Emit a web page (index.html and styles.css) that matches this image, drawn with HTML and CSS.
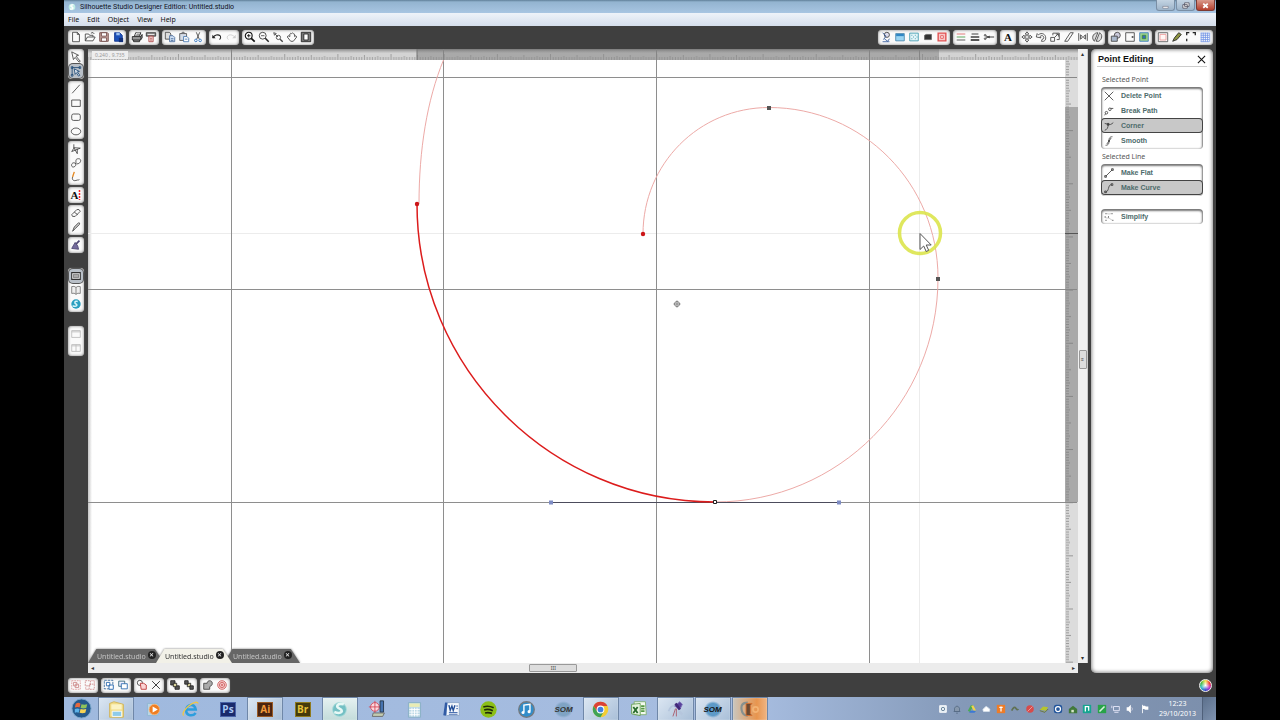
FILE: index.html
```html
<!DOCTYPE html>
<html lang="en">
<head>
<meta charset="utf-8">
<title>Silhouette Studio Designer Edition: Untitled.studio</title>
<link rel="stylesheet" href="styles.css">
</head>
<body>
<div class="desktop">
  <header class="titlebar">
    <svg class="app-logo" viewBox="0 0 12 12"><circle cx="6" cy="6" r="5" fill="#bfeee6" stroke="none"/><path d="M8 3C4 2 3 5 6 6s1 4-3 3" stroke="#fff" stroke-width="2"/></svg>
    <h1 class="title">Silhouette Studio Designer Edition: Untitled.studio</h1>
    <div class="window-buttons">
      <button class="win" aria-label="Minimize"><svg viewBox="0 0 18 10"><path d="M6 6h6v2H6z" fill="#fff" stroke="#667" stroke-width=".6"/></svg></button>
      <button class="win" aria-label="Restore"><svg viewBox="0 0 18 10"><path d="M8 2h5v4H8zM6 4h5v4H6z" fill="#eee" stroke="#556" stroke-width=".9"/></svg></button>
      <button class="win win-close" aria-label="Close window"><svg viewBox="0 0 18 10"><path d="M6.500 3l5 4.500M11.500 3l-5 4.500" stroke="#fff" stroke-width="2"/></svg></button>
    </div>
  </header>
  <nav class="menubar">
    <button>File</button><button>Edit</button><button>Object</button><button>View</button><button>Help</button>
  </nav>

  <div class="toolbar">
    <div class="group">
      <button aria-label="New"><svg viewBox="0 0 14 14"><path d="M3 1.500h5.500L11 4v8.500H3zM8.500 1.500V4H11"/></svg></button>
      <button aria-label="Open"><svg viewBox="0 0 14 14"><path d="M1.500 11.500V3.500h4l1 1.500h4v2M1.500 11.500L4 7h9l-2.500 4.500zM8 2.500q3-2 4 1"/></svg></button>
      <button aria-label="Save"><svg viewBox="0 0 14 14"><path d="M2 2h9l1 1v9H2z" fill="#c9a7a0" stroke="#704a48"/><path d="M4 2h6v4H4zM4 8h6v4H4z" fill="#fff" stroke="#704a48"/></svg></button>
      <button aria-label="Save to SD card"><svg viewBox="0 0 14 14"><path d="M3 2h6l3 3v7H3z" fill="#1c50b8" stroke="#173a90"/><path d="M5 2h4v3H5z" fill="#9cc0f0" stroke="none"/><path d="M8 8h5v5H8z" fill="#123078" stroke="none"/></svg></button>
    </div>
    <div class="group">
      <button aria-label="Print"><svg viewBox="0 0 14 14"><path d="M4 6l1.500-4h6L10 6M1.500 6.500h10v4h-10zM3 10.500v2h7v-2M11.500 6.500L13 4v4l-1.500 2" fill="#999" stroke="#222"/><path d="M5.500 5l1-2.500h4" stroke="#fff"/></svg></button>
      <button aria-label="Send to Silhouette"><svg viewBox="0 0 14 14"><path d="M1.500 2h11v4h-11z" fill="#888" stroke="#333"/><path d="M3 4h8" stroke="#fff"/><path d="M4.500 6h5v6.500h-5z" fill="#f3d6d4" stroke="#a44"/><path d="M6 8.500h2M6 10.500h2" stroke="#a44"/></svg></button>
    </div>
    <div class="group">
      <button aria-label="Copy"><svg viewBox="0 0 14 14"><path d="M1.500 1.500h5l1.500 2v6H1.500z" fill="#ddd"/><path d="M6.500 5.500h4l2 2v5h-6zM8 9h3M8 11h3" fill="#cfe0f5" stroke="#4a6c9c"/></svg></button>
      <button aria-label="Paste"><svg viewBox="0 0 14 14"><path d="M2 3h8v8H2zM4 3l1-1.500h2L8 3" fill="#d5dde8" stroke="#555"/><path d="M6.500 6.500h4l2 2v4h-6zM8 9.500h3" fill="#fff" stroke="#4677b0"/></svg></button>
      <button aria-label="Cut"><svg viewBox="0 0 14 14"><path d="M5 1.500l3.500 8M9 1.500l-3.500 8"/><circle cx="4.500" cy="11" r="1.500" stroke="#2c71c0"/><circle cx="9.500" cy="11" r="1.500" stroke="#2c71c0"/></svg></button>
    </div>
    <div class="group">
      <button aria-label="Undo"><svg viewBox="0 0 14 14"><path d="M2 8c2-3 6-5 9-2 1 2 0 3-1 4" stroke="#222" stroke-width="1.200"/><path d="M1.500 4.500v4h4z" fill="#222" stroke="none"/></svg></button>
      <button aria-label="Redo"><svg viewBox="0 0 14 14"><path d="M12 8C10 5 6 3 3 6c-1 2 0 3 1 4" stroke="#ccc"/><path d="M12.500 4.500v4h-4z" fill="#ccc" stroke="none"/></svg></button>
    </div>
    <div class="group">
      <button aria-label="Zoom in"><svg viewBox="0 0 14 14"><circle cx="5.500" cy="5.500" r="4" stroke="#111" stroke-width="1.300"/><path d="M3.500 5.500h4M5.500 3.500v4" stroke="#111"/><path d="M8.500 8.500l4 4" stroke="#111" stroke-width="2"/></svg></button>
      <button aria-label="Zoom out"><svg viewBox="0 0 14 14"><circle cx="5.500" cy="5.500" r="4" stroke="#333"/><path d="M3.500 5.500h4"/><path d="M8.500 8.500l4 4" stroke="#222" stroke-width="1.800"/></svg></button>
      <button aria-label="Zoom to selection"><svg viewBox="0 0 14 14"><path d="M2 2l3 1-2 2zM4 4l3 3" /><circle cx="7.500" cy="7.500" r="2.500"/><path d="M9.500 9.500l3 3" stroke-width="1.600"/></svg></button>
      <button aria-label="Pan"><svg viewBox="0 0 14 14"><path d="M5.500 12L1.500 7l1-1.500 2 1V3.500q1-1.500 2-.5 1-1.500 2 0 1.500 0 1.500 1.500v2l1.500-1 1 1.500-4 5z"/></svg></button>
      <button aria-label="Fit to page"><svg viewBox="0 0 14 14"><path d="M1.500 1.500h11v11h-11z" fill="#777" stroke="#222"/><path d="M4.500 3.500h5v7h-5z" fill="#fff" stroke="#222"/></svg></button>
    </div>
    <div class="spacer"></div>
    <div class="group">
      <button aria-label="Fill colour"><svg viewBox="0 0 14 14"><circle cx="8" cy="4.500" r="3" fill="#dde" /><path d="M3 2l4 4-3 4M3 12.500h8M5 9l4 3 2-3" stroke="#345a9c"/></svg></button>
      <button aria-label="Gradient fill"><svg viewBox="0 0 14 14"><path d="M2 3h10v8.500H2z" fill="#9ad4f2" stroke="#4a86ac"/><path d="M2.500 3.500h9V6h-9z" fill="#2f86c4" stroke="none"/></svg></button>
      <button aria-label="Pattern fill"><svg viewBox="0 0 14 14"><path d="M2 2.500h10v9H2z" fill="#e2f4f8" stroke="#3f9ab0"/><path d="M4 5h1M8 5h1M6 7h1M10 7h1M4 9h1M8 9h1" stroke="#278ca5"/></svg></button>
      <button aria-label="Shadow"><svg viewBox="0 0 14 14"><path d="M3 5l2-1 6 0v6l-8 0z" fill="#333" stroke="#666"/></svg></button>
      <button aria-label="Line colour"><svg viewBox="0 0 14 14"><path d="M2.500 2.500h9v9h-9z" fill="#f9c8c8" stroke="#e05050" stroke-width="1.600"/><path d="M5.500 5.500h3v3h-3z" fill="#fff" stroke="#e05050"/></svg></button>
    </div>
    <div class="group">
      <button aria-label="Line style"><svg viewBox="0 0 14 14"><path d="M2 3.500h10" stroke="#d66"/><path d="M2 7h10" stroke="#494"/><path d="M2 10.500h10" stroke="#444"/></svg></button>
      <button aria-label="Line weight"><svg viewBox="0 0 14 14"><path d="M3 3.500h8" stroke="#222"/><path d="M2 7h10" stroke="#222" stroke-width="1.500"/><path d="M2 10.500h10" stroke="#222" stroke-width="1.800"/></svg></button>
      <button aria-label="Cut style"><svg viewBox="0 0 14 14"><path d="M3 5.500l5 2.500M3 8.500L8 6M6 7h7" stroke="#222"/><circle cx="2.500" cy="5" r="1"/><circle cx="2.500" cy="9" r="1"/></svg></button>
    </div>
    <div class="group">
      <button aria-label="Text style"><b class="letter">A</b></button>
    </div>
    <div class="group">
      <button aria-label="Move"><svg viewBox="0 0 14 14"><path d="M7 1l2 2.500H8V6h2.500V5L13 7l-2.500 2V8H8v2.500h1L7 13l-2-2.500h1V8H3.500v1L1 7l2.500-2v1H6V3.500H5z"/></svg></button>
      <button aria-label="Rotate"><svg viewBox="0 0 14 14"><path d="M1.500 7l1-4 1.500 1.500C8 1 12.500 4 12.500 8s-3 4.500-5 4l1-2.500c2 0 2-2 1.500-3C9 5 7 5 6 6.500L7 8z"/></svg></button>
      <button aria-label="Scale"><svg viewBox="0 0 14 14"><path d="M2 7.500h4.500V12H2zM4.500 5V2.500H12V10H9M6.500 7.500l4-4M8 3.500h3v3"/></svg></button>
      <button aria-label="Shear"><svg viewBox="0 0 14 14"><path d="M2 12L8.500 2h3.500L5.500 12z"/></svg></button>
      <button aria-label="Align"><svg viewBox="0 0 14 14"><path d="M2 2.500v9M12 2.500v9M4 4.500l2 1.500v2L4 9.500zM10 4.500L8 6v2l2 1.500z"/></svg></button>
      <button aria-label="Replicate"><svg viewBox="0 0 14 14"><path d="M3 11C0 6 4 2 8 2L4 12zM6 12l4-10c4 2 3 8-1 10z" fill="#ddd"/></svg></button>
    </div>
    <div class="group">
      <button aria-label="Modify"><svg viewBox="0 0 14 14"><circle cx="8.500" cy="5" r="3.500" fill="#ccd"/><path d="M1.500 6h7v6h-7z" fill="#aab8cc"/></svg></button>
      <button aria-label="Offset"><svg viewBox="0 0 14 14"><path d="M2 2h10v10H2z"/><path d="M9 7h2" stroke-width="2"/></svg></button>
      <button aria-label="Trace"><svg viewBox="0 0 14 14"><path d="M2 2h10v10H2z" fill="#9bd08d" stroke="#3d7dc0"/><path d="M5 5h4v4H5z" fill="#3567c0" stroke="#3a8a3a"/></svg></button>
    </div>
    <div class="group">
      <button aria-label="Page settings"><svg viewBox="0 0 14 14"><path d="M1.500 2h11v10.500h-11z" stroke="#555"/><path d="M3.500 4h7v6.500h-7z" fill="#fff6f4" stroke="#e99"/></svg></button>
      <button aria-label="Registration marks"><svg viewBox="0 0 14 14"><path d="M2 12l2-4 5-6 3 2-5 6z" fill="#8d9440" stroke="#222"/></svg></button>
      <button aria-label="Cut marks"><svg viewBox="0 0 14 14"><path d="M2 5V2h3M9 2h3v3M2 9v3" stroke="#222" stroke-width="1.500"/></svg></button>
      <button aria-label="Grid"><svg viewBox="0 0 14 14"><path d="M2 2.500h10M2 5h10M2 7.500h10M2 10h10M2 12.500h10M2.500 2v10.500M5 2v10.500M7.500 2v10.500M10 2v10.500M12.500 2v10.500" stroke="#6f92e6" stroke-width=".9"/></svg></button>
    </div>
  </div>

  <main class="workspace">
    <aside class="toolbox">
      <div class="group">
        <button aria-label="Select"><svg viewBox="0 0 14 14"><path d="M2 1l8 4-3 1 5 6-1.500 1L6 7.500 4 10z"/></svg></button>
        <button class="active" aria-label="Edit points"><svg viewBox="0 0 14 14"><path d="M2.500 12V3h9M1.500 2h2v2h-2zM10.500 2h2v2h-2zM1.500 11h2v2h-2z" stroke="#234d78"/><path d="M5 4.500l6 3-2.500.5 3 4-1.500 1-2.500-4L6 11z" fill="#dfe8f2" stroke="#234d78"/></svg></button>
      </div>
      <div class="group">
        <button aria-label="Line"><svg viewBox="0 0 14 14"><path d="M2.500 12L11.500 2"/></svg></button>
        <button aria-label="Rectangle"><svg viewBox="0 0 14 14"><path d="M2 3.500h10v7.500H2z"/></svg></button>
        <button aria-label="Rounded rectangle"><svg viewBox="0 0 14 14"><rect x="2" y="3.500" width="10" height="7.500" rx="2"/></svg></button>
        <button aria-label="Ellipse"><svg viewBox="0 0 14 14"><ellipse cx="7" cy="7.500" rx="5.500" ry="4"/></svg></button>
      </div>
      <div class="group">
        <button aria-label="Polygon"><svg viewBox="0 0 14 14"><path d="M4.500 1.500v4.500L2 10l10-4-7.500-.5L8.500 12.500V7"/></svg></button>
        <button aria-label="Curve"><svg viewBox="0 0 14 14"><path d="M7 8C4 5 1 8 2 10.500s5 1 5-2.500-1-6 3-6 3 6-2 6"/></svg></button>
        <button aria-label="Freehand"><svg viewBox="0 0 14 14"><path d="M5 1L3 7" stroke="#e58a24" stroke-width="1.600"/><path d="M3 7c-1 3 1 5 4 4s2 0 4-1"/></svg></button>
      </div>
      <div class="group">
        <button aria-label="Text"><b class="letter">A</b><svg class="caret" viewBox="0 0 3 12"><path d="M1.500 1v10" stroke="#f22" stroke-width="1.500" stroke-dasharray="2 1"/></svg></button>
      </div>
      <div class="group">
        <button aria-label="Eraser"><svg viewBox="0 0 14 14"><path d="M2 9l6-6q3-1 4 2l-6 6q-4 1-4-2zM5 6l4 3" /></svg></button>
        <button aria-label="Knife"><svg viewBox="0 0 14 14"><path d="M3 12l2-5 5-5q2 0 1 2L6 9z" fill="#ccc"/></svg></button>
      </div>
      <div class="group">
        <button aria-label="Eyedropper"><svg viewBox="0 0 14 14"><path d="M2 11l4-7 3 4 1 4z" fill="#746b9c" stroke="#4f4774"/><path d="M7 6l4-4" stroke="#4f4774" stroke-width="2"/></svg></button>
      </div>
      <div class="group views">
        <button class="active" aria-label="Drawing area"><svg viewBox="0 0 14 14"><path d="M2 3h10v8H2z" fill="#fff" stroke="#333" stroke-width="1.300"/><path d="M4 5h6v4H4z" fill="#aaa" stroke="#777"/></svg></button>
        <button aria-label="Library"><svg viewBox="0 0 14 14"><path d="M2 3q3-1 5 1 2-2 5-1v8q-3-1-5 1-2-2-5-1zM7 4v8" fill="#eee" stroke="#777"/></svg></button>
        <button aria-label="Store"><svg viewBox="0 0 14 14"><circle cx="7" cy="7" r="5.500" fill="#2a9fc0" stroke="none"/><path d="M9 4C5 3 5 6 7 7s1 4-4 2" stroke="#d6f3f8" stroke-width="1.800"/></svg></button>
      </div>
      <div class="group split">
        <button aria-label="Library split"><svg viewBox="0 0 14 14"><path d="M2 3h10v8H2zM2 4.500h10" stroke="#bbb"/></svg></button>
        <button aria-label="Tile windows"><svg viewBox="0 0 14 14"><path d="M2 3h10v8H2zM7 3v8M2 4.500h10" stroke="#bbb"/></svg></button>
      </div>
    </aside>

    <section class="document">
      <div class="ruler-top">
        <svg viewBox="88 49 990 11" preserveAspectRatio="none">
          <defs>
            <pattern id="ticks-x" x="18.500" y="49" width="53.150" height="11" patternUnits="userSpaceOnUse"><path d="M.5 5v6M27 6v5M13.800 7v4M40.300 7v4M3.200 8v3M5.800 8v3M8.500 8v3M11.100 8v3M16.400 8v3M19.100 8v3M21.800 8v3M24.400 8v3M29.700 8v3M32.400 8v3M35 8v3M37.700 8v3M43 8v3M45.700 8v3M48.300 8v3M51 8v3" stroke="#888" stroke-width=".7"/></pattern>
            <linearGradient id="ruler-shade" x2="0" y2="1"><stop offset="0" stop-color="#666" stop-opacity=".7"/><stop offset=".4" stop-color="#888" stop-opacity="0"/></linearGradient>
          </defs>
          <g stroke="none"><path d="M88 49h990v11H88z" fill="#d3d3d3"/><path d="M417 49h522v11H417z" fill="#a9a9a9"/>
          <path d="M88 49h990v11H88z" fill="url(#ticks-x)"/><path d="M88 49h990v11H88z" fill="url(#ruler-shade)"/></g>
          <path d="M231.500 49v11M443.500 49v11M656.500 49v11M869.500 49v11M919.500 49v11" stroke="#858585"/><path d="M417 49v11" stroke="#777"/>
        </svg>
        <span class="coords">0.240 , 9.735</span>
      </div>
      <div class="canvas">
        <svg viewBox="88 60 977 603" preserveAspectRatio="xMinYMin slice">
          <path d="M88 233.500h977M919.500 60v603" stroke="#ececec"/>
          <path d="M231.500 60v603M443.500 60v603M656.500 60v603M869.500 60v603M88 77.500h977M88 289.500h977M88 502.500h977" stroke="#8e8e8e"/>
          <g stroke="#edaaa7" stroke-width="1">
            <path d="M419 204C419 150 427 100 443.500 60"/>
            <path d="M715 502C839 502 938 402 938 278C938 184 863 107.500 769 107.500C699 107.500 643 164 643 234"/>
          </g>
          <path d="M551 502.500h288" stroke="#4c4c5c"/>
          <path d="M417 204C417 368 551 502 715 502" stroke="#dc1c1c" stroke-width="1.500"/>
          <g stroke="none"><circle cx="417" cy="204" r="2.200" fill="#cc1518"/><circle cx="643" cy="234" r="2.200" fill="#cc1518"/>
            <path d="M767 106h4v4h-4zM936 277h4v4h-4z" fill="#555"/><path d="M549 500.500h4v4h-4zM837 500.500h4v4h-4z" fill="#7e8cc4"/></g>
          <path d="M713.500 500.500h3v3h-3z" fill="#fff" stroke="#222"/>
          <g stroke="#777" stroke-width=".9"><circle cx="677" cy="304" r="2.500"/><path d="M677 300.500v7M673.500 304h7"/></g>
          <circle cx="920" cy="233" r="20.500" stroke="#dbe44c" stroke-width="3.500" opacity=".9"/>
          <path d="M920 233.500v16l3.700-3.500 2.500 5.500 2.500-1.200-2.500-5.300h5z" fill="#fff" stroke="#555"/>
        </svg>
        <div class="tabs" role="tablist">
          <div class="tab"><button class="tab-name" role="tab">Untitled.studio</button><button class="tab-close" aria-label="Close tab">✕</button></div>
          <div class="tab current"><button class="tab-name" role="tab" aria-selected="true">Untitled.studio</button><button class="tab-close" aria-label="Close tab">✕</button></div>
          <div class="tab"><button class="tab-name" role="tab">Untitled.studio</button><button class="tab-close" aria-label="Close tab">✕</button></div>
        </div>
      </div>
      <div class="ruler-side">
        <svg viewBox="1065 60 13 603" preserveAspectRatio="none">
          <defs><pattern id="ticks-y" x="1065" y="77" width="13" height="53.150" patternUnits="userSpaceOnUse"><path d="M0 .5h7M0 27h5M0 13.800h4M0 40.300h4M0 3.200h3M0 5.800h3M0 8.500h3M0 11.100h3M0 16.400h3M0 19.100h3M0 21.800h3M0 24.400h3M0 29.700h3M0 32.400h3M0 35h3M0 37.700h3M0 43h3M0 45.700h3M0 48.300h3M0 51h3" transform="translate(1)" stroke="#777" stroke-width=".7"/></pattern></defs>
          <g stroke="none"><path d="M1065 60h13v603h-13z" fill="#dcdcdc"/><path d="M1065 107h13v395h-13z" fill="#a9a9a9"/>
          <path d="M1065 60h13v603h-13z" fill="url(#ticks-y)"/></g>
          <path d="M1065 77.500h12M1065 289.500h12M1065 502.500h12" stroke="#888"/><path d="M1065 233.500h13" stroke="#555"/>
        </svg>
      </div>
      <div class="scroll-y"><button aria-label="Scroll up">▴</button><span class="thumb">≡</span><button aria-label="Scroll down">▾</button></div>
      <div class="scroll-x"><button aria-label="Scroll left">◂</button><span class="thumb">III</span><button aria-label="Scroll right">▸</button></div>
    </section>

    <aside class="panel">
      <header class="panel-head"><h2>Point Editing</h2><button aria-label="Close panel"><svg viewBox="0 0 10 10"><path d="M1 1l8 8M9 1L1 9" stroke="#111" stroke-width="1.200"/></svg></button></header>
      <h3>Selected Point</h3>
      <div class="options">
        <button><svg viewBox="0 0 14 14"><path d="M2 2l10 10M12 2L2 12"/></svg>Delete Point</button>
        <button><svg viewBox="0 0 14 14"><circle cx="4" cy="9" r="1.500"/><circle cx="8" cy="5" r="1.500"/><path d="M3 10l-1 2M9 4h3"/></svg>Break Path</button>
        <button class="chosen"><svg viewBox="0 0 14 14"><path d="M2 4l4 1c0 4-1 6-4 7M6 5c2 1 4 0 6-2"/><path d="M5 4h2v2H5z" fill="#444"/></svg>Corner</button>
        <button><svg viewBox="0 0 14 14"><path d="M3 12c4 0 4-3 4-5s0-5 4-5M4.500 10.500l5-7"/><path d="M6.500 6.500h1v1h-1z" fill="#444"/></svg>Smooth</button>
      </div>
      <h3>Selected Line</h3>
      <div class="options">
        <button><svg viewBox="0 0 14 14"><path d="M3 11l8-8M2 10h2v2H2zM10 2h2v2h-2z"/></svg>Make Flat</button>
        <button class="chosen"><svg viewBox="0 0 14 14"><path d="M2 12c6 0 3-9 8-9M2 10.500h2v2H2zM9.500 2h2v2h-2z"/></svg>Make Curve</button>
      </div>
      <div class="options simplify">
        <button><svg viewBox="0 0 14 14"><path d="M3 3h1M10 3h1M2 7h1M6 7h1M11 11h1M3 11h1" stroke-width="1.600"/><path d="M4 3q3 1 6 0M3 8q4-1 8 3" stroke="#aaa" stroke-width=".7"/></svg>Simplify</button>
      </div>
    </aside>
  </main>

  <footer class="bottombar">
    <div class="group">
      <button aria-label="Group"><svg viewBox="0 0 14 14"><path d="M2 2h10v10H2z" stroke="#d99" stroke-dasharray="2 1"/><path d="M4 4h4v4H4zM6 6h4v4H6z" stroke="#c88"/></svg></button>
      <button aria-label="Ungroup"><svg viewBox="0 0 14 14"><path d="M1.500 2h6v6h-6zM6 6h6v6H6z" stroke="#c88" stroke-dasharray="2 1"/><path d="M8 2h4v4M2 9v3h4" stroke="#daa"/></svg></button>
    </div>
    <div class="group">
      <button aria-label="Select all"><svg viewBox="0 0 14 14"><path d="M1.500 1.500h10v10h-10z" stroke="#369" stroke-dasharray="3 1"/><path d="M4 4h4v4H4zM7 7h5v5H7z" fill="#fff" stroke="#2767ae"/></svg></button>
      <button aria-label="Duplicate"><svg viewBox="0 0 14 14"><path d="M2 2.500h7v6H2z" fill="#eef" stroke="#367"/><path d="M5 5.500h7v6H5z" fill="#fff" stroke="#2767ae"/></svg></button>
    </div>
    <div class="group">
      <button aria-label="Weld"><svg viewBox="0 0 14 14"><circle cx="4.500" cy="4.500" r="3"/><path d="M5 5h4l3 2v5H6z" fill="#fbd5d5" stroke="#b33"/></svg></button>
      <button aria-label="Delete"><svg viewBox="0 0 14 14"><path d="M2.500 2.500l9 9M11.500 2.500l-9 9" stroke="#222"/></svg></button>
    </div>
    <div class="group">
      <button aria-label="Bring to front"><svg viewBox="0 0 14 14"><path d="M2 2h5v5H2zM7 8h5v4H7z" fill="#555" stroke="#222"/><path d="M5 5h4v4H5z" fill="#d8d39a" stroke="#222"/></svg></button>
      <button aria-label="Send to back"><svg viewBox="0 0 14 14"><path d="M5 5h4v4H5z" fill="#d8d39a" stroke="#222"/><path d="M2 2h4v4H2zM8 8h4v4H8z" fill="#555" stroke="#222"/></svg></button>
    </div>
    <div class="group">
      <button aria-label="Union"><svg viewBox="0 0 14 14"><path d="M2 5h4c0-4 6-4 6 0 0 3-2 3-3 4v3H2z" fill="#aaa"/></svg></button>
      <button aria-label="Offset path"><svg viewBox="0 0 14 14"><circle cx="7" cy="7" r="5" fill="#fbd9d9" stroke="#c55"/><circle cx="7" cy="7" r="3" stroke="#c55"/><circle cx="7" cy="7" r="1" stroke="#c55"/></svg></button>
    </div>
    <div class="spacer"></div>
    <button class="wheel" aria-label="Colours"></button>
  </footer>

  <div class="taskbar">
    <button class="start" aria-label="Start"><svg viewBox="0 0 22 22"><circle cx="11" cy="11" r="10" fill="#25598c" stroke="#7aa6c9"/><path d="M5 6q3-2 5 0l-1 4q-2-1-5 0z" fill="#e6683c" stroke="none"/><path d="M11 6.500q3 1 6 0l-1 4q-3 1-6 0z" fill="#8fc45a" stroke="none"/><path d="M4 11.500q3-1 5 0l-1 4q-2-1-4 0z" fill="#5cb2e8" stroke="none"/><path d="M10 11.500q3 1 6 0l-1 4q-3 1-6 0z" fill="#f6d354" stroke="none"/></svg></button>
    <div class="apps">
      <button class="open" aria-label="Explorer"><svg viewBox="0 0 22 22"><path d="M3 4l5-2 11 3v15H3z" fill="#f1dc86" stroke="#cfb257"/><path d="M5 5h12v6H5z" fill="#fbf3c4" stroke="none"/><path d="M6 13h11v6H6z" fill="#8ecbea" stroke="#fff"/></svg></button>
      <button aria-label="Media Player"><svg viewBox="0 0 22 22"><path d="M4 4h12v14H4z" fill="#b9d5e6" stroke="#8eb6d2"/><circle cx="12" cy="11" r="6" fill="#ee7d22" stroke="#f7b072"/><path d="M10 7.500l6 3.500-6 3.500z" fill="#fff" stroke="none"/></svg></button>
      <button aria-label="Internet Explorer"><svg viewBox="0 0 22 22"><path d="M17 15c-3 4-11 4-11-3S16 3 17 11H7" stroke="#2d9ede" stroke-width="3"/><path d="M3 18C-1 13 17-2 20 4" stroke="#edc64b" stroke-width="1.500"/></svg></button>
      <button aria-label="Photoshop"><span class="adobe ps">Ps</span></button>
      <button class="open" aria-label="Illustrator"><span class="adobe ai">Ai</span></button>
      <button aria-label="Bridge"><span class="adobe br">Br</span></button>
      <button class="open bright" aria-label="Silhouette Studio"><svg viewBox="0 0 22 22"><circle cx="11" cy="11" r="8" fill="#74c0c4" stroke="#a9dcda"/><path d="M16 5C8 3 6 8 11 10s3 7-6 4" stroke="#e6f8f5" stroke-width="3"/></svg></button>
      <button aria-label="Registration tool"><svg viewBox="0 0 22 22"><circle cx="8" cy="8" r="5" fill="#fbd8de" stroke="#d34557"/><path d="M8 1v14M1 8h14" stroke="#d34557"/><path d="M14 1h4v13h-4z" fill="#4673b0" stroke="#234"/><path d="M6 15h13l-2 4H5z" fill="#c2cbb0" stroke="#666"/></svg></button>
      <button aria-label="Calculator"><svg viewBox="0 0 22 22"><path d="M4 3h14v17H4z" fill="#bcd9e6" stroke="#87aec4"/><path d="M5 4h12v4H5z" fill="#e9ecb4" stroke="none"/><path d="M5 11h12M5 14h12M5 17h12M8 9v10M11 9v10M14 9v10" stroke="#fff"/></svg></button>
      <button aria-label="Word"><svg viewBox="0 0 22 22"><path d="M5 3h15v15H5z" fill="#f3f7fc" stroke="#8ba6c8"/><path d="M5 3L3 18" stroke="#315ba5" stroke-width="3"/><path d="M8 6l1.500 6L11.500 7l1.500 5L15 6" stroke="#244f98" stroke-width="1.600"/><path d="M8 14.500h10M8 16.500h10M16.500 7h2M16.500 10h2" stroke="#315ba5"/></svg></button>
      <button aria-label="Spotify"><svg viewBox="0 0 22 22"><circle cx="11" cy="11" r="9.500" fill="#8cbf17" stroke="none"/><path d="M5 8q6-2 12 1M6 11.500q5-1.500 10 1M7 15q4-1 8 .5" stroke="#202b08" stroke-width="1.900"/></svg></button>
      <button aria-label="iTunes"><svg viewBox="0 0 22 22"><circle cx="11" cy="11" r="9" fill="#318dca" stroke="#75797e" stroke-width="1.500"/><path d="M8 14V6l7-1v8" stroke="#fff" stroke-width="1.600"/><circle cx="7" cy="14.500" r="1.800" fill="#fff" stroke="none"/><circle cx="14" cy="13.500" r="1.800" fill="#fff" stroke="none"/></svg></button>
      <button aria-label="SOM"><span class="som">SOM</span></button>
      <button class="open" aria-label="Chrome"><svg viewBox="0 0 22 22"><g stroke="none"><circle cx="11" cy="11" r="9" fill="#f3cd34"/><path d="M3 7a9 9 0 0 1 16 0h-8l-4 6z" fill="#db4236"/><path d="M3 7a9 9 0 0 0 8 13l4-7H7z" fill="#40a355"/><circle cx="11" cy="11" r="4.500" fill="#fff"/><circle cx="11" cy="11" r="3.300" fill="#3f7fe0"/></g></svg></button>
      <button aria-label="Excel"><svg viewBox="0 0 22 22"><path d="M6 2h13l1 15H6z" fill="#f3faef" stroke="#7cad6d"/><path d="M3 5l10-1v14L3 16z" fill="#e4f2dd" stroke="#619c4f"/><path d="M5 8l5 7M10 8l-5 7" stroke="#26692b" stroke-width="2"/><path d="M14 7h4M14 10h4M14 13h4" stroke="#559844" stroke-width="2"/></svg></button>
      <button class="open" aria-label="Stellarium"><svg viewBox="0 0 22 22"><path d="M3 13q3-8 9-6" stroke="#b5c6dd" stroke-width="2"/><path d="M10 7l6-5 3 3-3 6z" fill="#59429c" stroke="#7d72b8"/><path d="M11 4l5 7" stroke="#422878" stroke-width="3"/><path d="M11 10l-3 9M12 10v9" stroke="#a85464"/><path d="M15 13l4 4" stroke="#b5c6dd" stroke-width="3"/></svg></button>
      <button class="open" aria-label="SOM window"><span class="som dark">SOM</span></button>
      <button class="open hot" aria-label="Camtasia"><svg viewBox="0 0 22 22"><path d="M9 3Q0 3 2 12q1 6 7 6" stroke="#86918f" stroke-width="2.500"/><path d="M7 4h7l-2 2v10l2 2H7z" fill="#6b4a32" stroke="#d9702d"/><circle cx="18" cy="11" r="3" stroke="#f3b373" stroke-width="2"/></svg></button>
    </div>
    <div class="tray">
      <div class="tray-icons">
        <svg viewBox="0 0 12 12"><path d="M2 2h8v8H2z" fill="#e6eef5" stroke="#fff"/><circle cx="6" cy="6" r="2" stroke="#5c7890"/></svg>
        <svg viewBox="0 0 12 12"><path d="M3 9V5q3-5 6 0v4zM2 9h8M5 11h2" fill="#8798ad" stroke="#566b84"/></svg>
        <svg viewBox="0 0 12 12"><path d="M4.500 1.500h3L6 5 3.500 9.500 1 8z" fill="#4caa55" stroke="none"/><path d="M7.500 1.500L11 8H8L5 2.500z" fill="#f2d34a" stroke="none"/><path d="M4 8h7l-2 2.500H2.500z" fill="#3b79d4" stroke="none"/></svg>
        <svg viewBox="0 0 12 12"><path d="M3 9q-2-3 1-4 2-4 5 0 3 1 1 4z" fill="#fff" stroke="#d5dfe9"/></svg>
        <svg viewBox="0 0 12 12"><path d="M1 1h10v10H1z" fill="#ee7c27" stroke="none"/><path d="M6 3v6M4 4h4" stroke="#fff" stroke-width="1.500"/></svg>
        <svg viewBox="0 0 12 12"><path d="M2 8q3-6 5-3t3 1" stroke="#607153" stroke-width="2"/></svg>
        <svg viewBox="0 0 12 12"><circle cx="6" cy="6" r="4.500" fill="#d84b4b" stroke="none"/><path d="M3 9l6-6" stroke="#eaa"/></svg>
        <svg viewBox="0 0 12 12"><path d="M1 7l4-4 6 1-3 4z" fill="#b7c52b" stroke="none"/><path d="M1 8l6 2 4-4" stroke="#68732a"/></svg>
        <svg viewBox="0 0 12 12"><rect x="1" y="1" width="10" height="10" rx="3" fill="#24569c" stroke="none"/><circle cx="6" cy="6" r="3" stroke="#fff" stroke-width="1.500"/></svg>
        <svg viewBox="0 0 12 12"><path d="M1 6l5-4 5 4v5H1z" fill="#41793b" stroke="none"/><path d="M4 10V7h3v3" fill="#d7e5c9" stroke="none"/></svg>
        <svg viewBox="0 0 12 12"><path d="M1 1h10v10H1z" fill="#16a590" stroke="none"/><path d="M4 9V3h4v5" stroke="#fff" stroke-width="1.500"/></svg>
        <svg viewBox="0 0 12 12"><path d="M1 1h10v10H1z" fill="#28a348" stroke="none"/><path d="M3 9l6-6" stroke="#d5f2dc" stroke-width="2"/></svg>
        <svg viewBox="0 0 12 12"><path d="M3 3h7v5H3zM4 10h5M1 2v3" stroke="#eef"/></svg>
        <svg viewBox="0 0 12 12"><path d="M2 4h2l3-3v10L4 8H2z" fill="#fff" stroke="none"/><path d="M8 4q2 2 0 4" stroke="#ccd"/></svg>
        <svg viewBox="0 0 12 12"><path d="M3 1v10" stroke="#fff"/><path d="M3 2h3l1 1h3v4H6L5 6H3z" fill="#fff" stroke="none"/></svg>
      </div>
      <div class="clock"><time>12:23</time><time>29/10/2013</time></div>
      <button class="peek" aria-label="Show desktop"></button>
    </div>
  </div>
</div>
</body>
</html>
```
FILE: styles.css
```css
* { box-sizing: border-box; }
html, body { height: 100%; margin: 0; }
body { background: #000; font-family: "Noto Sans", "Liberation Sans", sans-serif; font-size: 7px; color: #222; }
button { font: inherit; color: inherit; background: none; border: 0; padding: 0; margin: 0; display: flex; align-items: center; justify-content: center; }
svg { display: block; fill: none; stroke: #444; stroke-width: 1; }
h1, h2, h3 { margin: 0; font-weight: normal; }

.desktop { height: 100vh; margin: 0 5%; display: flex; flex-direction: column; background: #3f3f3f; overflow: hidden; }

.titlebar { flex: 0 0 13px; display: flex; align-items: center; gap: 4px; padding-left: 4px; background: linear-gradient(#5f7f98, #93b4d0 15%, #a8c5e2); }
.app-logo { width: 8px; height: 10px; }
.title { flex: 1; font: 7px/12px Roboto, sans-serif; color: #112; }
.window-buttons { display: flex; gap: 1px; align-self: flex-start; margin-right: 1px; }
.win { width: 19px; height: 11px; border: 1px solid #7a8fa5; border-top: 0; border-radius: 0 0 3px 3px; background: linear-gradient(#c4d4e3, #9db4ca); }
.win svg { width: 17px; height: 9px; }
.win-close { background: linear-gradient(#d99a8c, #b5402e); border-color: #7d3a32; }

.menubar { flex: 0 0 13px; display: flex; gap: 8px; padding-left: 4px; background: linear-gradient(#eef3f9, #d5deec); color: #111; }

.toolbar { flex: 0 0 23px; display: flex; align-items: center; gap: 3px; padding: 0 3px 1px 4px; }
.spacer { flex: 1; }
.group { display: flex; padding: 1px; border-radius: 4px; background: #fafafa; box-shadow: inset 0 0 3px #777, 0 0 1px #999; }
.group button { width: 14px; height: 13px; }
.group svg { width: 12px; height: 12px; }
.letter { font: bold 11px/12px "Liberation Serif", serif; color: #111; }
.group .caret { width: 3px; height: 12px; }

.workspace { flex: 1; min-height: 0; display: flex; }
.toolbox { flex: 0 0 24px; display: flex; flex-direction: column; align-items: flex-start; gap: 2px; padding-left: 4px; }
.toolbox .group { flex-direction: column; }
.toolbox .group button { height: 14px; }
.toolbox .views { margin-top: 13px; }
.toolbox .split { margin-top: 12px; }
.group .active { background: #b9c0c8; border-radius: 4px; box-shadow: 0 0 0 1px #555; }

.document { flex: 1; min-width: 0; display: grid; grid-template: 11px 1fr 10px / 1fr 13px 10px; }
.ruler-top { grid-area: 1 / 1 / 2 / 3; display: grid; }
.ruler-top svg { grid-area: 1 / 1; width: 100%; height: 11px; }
.coords { grid-area: 1 / 1; justify-self: start; align-self: center; margin-left: 4px; padding: 0 3px; font-size: 5px; line-height: 8px; color: #999; background: #eee; z-index: 1; }
.canvas { grid-area: 2 / 1; position: relative; min-height: 0; background: linear-gradient(90deg, #c4c4c4, #fff 4px); overflow: hidden; }
.canvas > svg { width: 100%; height: 100%; }
.ruler-side { grid-area: 2 / 2; min-height: 0; }
.ruler-side svg { width: 13px; height: 100%; }
.scroll-y { grid-area: 1 / 3 / 3 / 4; display: flex; flex-direction: column; align-items: center; justify-content: space-between; background: #f1f1f1; border-right: 1px solid #ccc; }
.scroll-x { grid-area: 3 / 1 / 4 / 3; display: flex; align-items: center; justify-content: space-between; background: #ececec; }
.scroll-y button, .scroll-x button { width: 9px; height: 10px; font-size: 6px; color: #333; }
.thumb { display: flex; align-items: center; justify-content: center; border: 1px solid #999; border-radius: 1px; background: #ddd; font-size: 5px; color: #444; }
.scroll-y .thumb { width: 8px; height: 19px; margin-top: 6px; }
.scroll-x .thumb { width: 48px; height: 8px; margin-right: 6%; }

.tabs { position: absolute; left: 0; bottom: 0; display: flex; filter: drop-shadow(0 0 1px #777); }
.tab { display: flex; align-items: center; gap: 2px; width: 76px; height: 14px; margin-right: -8px; padding-left: 9px; background: #666; color: #c4c4c4; clip-path: polygon(11% 0, 88% 0, 100% 100%, 0 100%); }
.tab.current { background: #f2f1e8; color: #333; z-index: 1; }
.tab-close { width: 8px; height: 8px; margin-bottom: 2px; border-radius: 4px; background: #222; color: #fff; font-size: 6px; }

.panel { flex: 0 0 122px; margin: 0 3px 0 3px; padding: 4px 10px; border-radius: 5px; background: #fff; box-shadow: inset 0 0 4px #555; }
.panel-head { display: flex; align-items: center; justify-content: space-between; height: 14px; margin: 0 -4px 8px; padding: 0 1px; border-bottom: 1px solid #ccc; }
.panel h2 { font: bold 9px/13px "Liberation Sans", sans-serif; color: #111; }
.panel-head svg { width: 9px; height: 9px; }
.panel h3 { height: 10px; margin: 0 1px 2px; font-size: 7px; line-height: 10px; color: #555; }
.options { margin-bottom: 3px; padding: 1px 0; border-radius: 4px; background: #fff; box-shadow: inset 0 1px 2px 1px #777; }
.options button { width: 100%; height: 15px; justify-content: flex-start; gap: 6px; padding-left: 2px; font: bold 7px/15px "Liberation Sans", sans-serif; color: #4d6b6b; border-radius: 4px; }
.options svg { width: 12px; height: 12px; }
.options .chosen { background: #c8c8c8; box-shadow: inset 0 0 0 1px #444; }
.options.simplify { margin-top: 13px; padding: 0; }

.bottombar { flex: 0 0 24px; display: flex; align-items: center; gap: 3px; padding: 0 4px; }
.wheel { width: 13px; height: 13px; border: 1px solid #eee; border-radius: 50%; background: radial-gradient(#fff, transparent 60%), conic-gradient(#f4e04d, #e33, #b3c, #34c, #3bc, #4b4, #f4e04d); }

.taskbar { flex: 0 0 23px; display: flex; background: linear-gradient(90deg, #9fb9de, #a7bde0 60%, #8499b8 78%, #7c8fac); }
.start { flex: 0 0 34px; }
.start svg { width: 21px; height: 21px; }
.apps { flex: 671 1 0; display: flex; }
.apps button { flex: 1 1 0; height: 23px; margin-right: 1px; border: 1px solid transparent; border-bottom: 0; }
.apps svg { width: 19px; height: 19px; }
.apps .open { border-color: #6f87a8; background: linear-gradient(135deg, #dbe6f2, #a9bfd8); box-shadow: inset 0 0 1px #fff; }
.apps .bright { background: linear-gradient(#e5f1f1, #c3dcda); }
.apps .hot { background: linear-gradient(90deg, #c9c6be, #e8954e 70%, #efb584); }
.adobe { width: 16px; height: 15px; border: 1px solid; font: bold 10px/13px "Open Sans", sans-serif; text-align: center; }
.ps { background: #1a2a6c; color: #a9c8f5; border-color: #4a63a8; }
.ai { background: #4a2410; color: #f29a3a; border-color: #9a5a24; }
.br { background: #453a0c; color: #e7c23a; border-color: #8f7a1e; }
.som { font: italic bold 8px/17px "Liberation Sans", sans-serif; color: #333; background: radial-gradient(#7fa3c4 50%, transparent 70%); }
.som.dark { color: #111; background: radial-gradient(#5d9ac8 50%, transparent 70%); }

.tray { flex: 447 1 0; display: flex; align-items: center; justify-content: flex-end; }
.tray-icons { display: flex; justify-content: space-between; width: 212px; }
.tray-icons svg { width: 10px; height: 10px; }
.clock { width: 52px; padding-left: 3px; display: flex; flex-direction: column; align-items: center; font-size: 7px; line-height: 10px; color: #fff; }
.peek { width: 14px; height: 23px; background: linear-gradient(135deg, #5c708c, #7f93b0); border-left: 1px solid #4f607a; }
```
